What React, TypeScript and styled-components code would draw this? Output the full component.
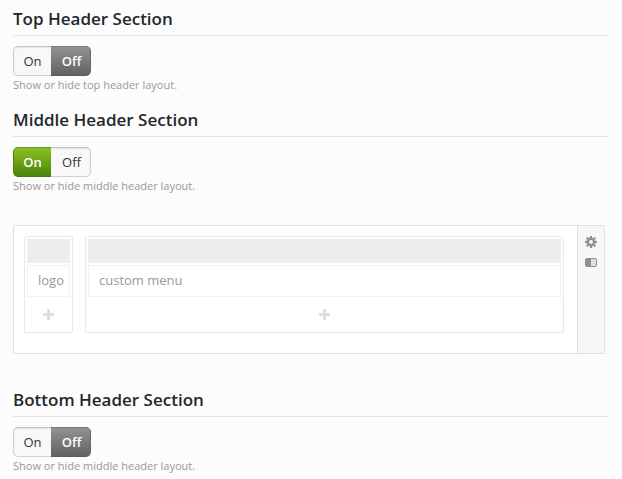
import React from 'react';
import styled, { createGlobalStyle, css } from 'styled-components';

const GlobalStyle = createGlobalStyle`
  * { box-sizing: border-box; }
  body {
    margin: 0;
    background: #fcfcfc;
    font-family: 'Open Sans', 'Noto Sans', sans-serif;
    overflow: hidden;
  }
`;

const Page = styled.main`
  width: 622px;
  height: 479px;
  padding: 0 14px 0 13px;
  overflow: hidden;
`;

const Section = styled.section`
  height: 101px;
`;

const Title = styled.h3`
  margin: 0 0 10px;
  height: 36px;
  padding-top: 7px;
  border-bottom: 1px solid #e5e5e5;
  font-size: 17px;
  line-height: 24px;
  font-weight: 600;
  color: #23282d;
`;

const Switch = styled.div`
  display: flex;
  width: 78px;
  height: 30px;
`;

const tones = {
  idle: css`
    background: #f8f8f8;
    border-color: #c4c4c4 #d0d0d0 #d0d0d0;
    color: #333;
    box-shadow: inset 0 1px 1px #e4e4e4;
  `,
  green: css`
    background: linear-gradient(#8abf20, #4b850c);
    border-color: #669a1c #4f8610 #457a0c;
    color: #fff;
    font-weight: 600;
  `,
  gray: css`
    background: linear-gradient(#929292, #626262);
    border-color: #777 #686868 #5c5c5c;
    color: #fff;
    font-weight: 600;
  `,
};

const Option = styled.button<{ $tone: keyof typeof tones }>`
  width: 38px;
  padding: 0;
  border: 1px solid;
  font-family: inherit;
  font-size: 13px;
  line-height: 28px;
  ${({ $tone }) => tones[$tone]}
  &:first-child {
    border-right: 0;
    border-radius: 5px 0 0 5px;
  }
  &:last-child {
    width: 40px;
    padding-left: 2px;
    border-left: 0;
    border-radius: 0 5px 5px 0;
  }
`;

const Hint = styled.p`
  margin: 1px 0 0;
  font-size: 11px;
  line-height: 16px;
  color: #999;
`;

const Builder = styled.div`
  display: flex;
  width: 592px;
  height: 129px;
  margin: 23px 0 27px;
  border: 1px solid #dfdfdf;
  border-radius: 2px;
  background: #fff;
`;

const Columns = styled.div`
  display: flex;
  flex: 1;
  align-items: flex-start;
  gap: 12px;
  padding: 10px 13px 0 10px;
`;

const Column = styled.div<{ $grow?: boolean }>`
  display: flex;
  flex-direction: column;
  ${({ $grow }) => ($grow ? 'flex: 1;' : 'width: 49px;')}
  height: 97px;
  padding: 2px;
  border: 1px solid #e8e8e8;
  border-radius: 2px;
`;

const Handle = styled.div`
  height: 24px;
  margin-bottom: 2px;
  background: #ededed;
`;

const Item = styled.div`
  height: 32px;
  padding-left: 10px;
  border: 1px solid #f1f1f1;
  font-size: 13px;
  line-height: 29px;
  color: #999;
`;

const AddButton = styled.button`
  display: flex;
  flex: 1;
  align-items: center;
  justify-content: center;
  padding: 2px 0 0;
  border: 0;
  background: none;
`;

const Tools = styled.aside`
  display: flex;
  flex-direction: column;
  align-items: center;
  width: 27px;
  padding-top: 10px;
  gap: 10px;
  border-left: 1px solid #dfdfdf;
  background: #f7f7f7;
  svg { display: block; }
`;

const PlusIcon = () => (
  <svg width="11" height="11" viewBox="0 0 11 11">
    <path d="M4 0h3v4h4v3H7v4H4V7H0V4h4z" fill="#dedede" />
  </svg>
);

const GearIcon = () => (
  <svg width="12" height="12" viewBox="0 0 12 12" fill="none" stroke="#8f8f8f">
    <circle cx="6" cy="6" r="3.2" strokeWidth="2.4" />
    <path d="M6 0v2M6 10v2M0 6h2M10 6h2M1.7 1.7l1.4 1.4M8.9 8.9l1.4 1.4M1.7 10.3l1.4-1.4M8.9 3.1l1.4-1.4" strokeWidth="2.2" />
  </svg>
);

const ContrastIcon = () => (
  <svg width="12" height="9" viewBox="0 0 12 9">
    <rect x=".5" y=".5" width="11" height="8" rx="1.5" fill="#dedede" stroke="#8f8f8f" />
    <path d="M1 1h5v7H1z" fill="#8f8f8f" />
  </svg>
);

interface SettingProps {
  title: string;
  hint: string;
  on?: boolean;
}

const Setting = ({ title, hint, on = false }: SettingProps) => (
  <Section>
    <Title>{title}</Title>
    <Switch>
      <Option $tone={on ? 'green' : 'idle'}>On</Option>
      <Option $tone={on ? 'idle' : 'gray'}>Off</Option>
    </Switch>
    <Hint>{hint}</Hint>
  </Section>
);

const BuilderColumn = ({ label, grow }: { label: string; grow?: boolean }) => (
  <Column $grow={grow}>
    <Handle />
    <Item>{label}</Item>
    <AddButton aria-label="Add">
      <PlusIcon />
    </AddButton>
  </Column>
);

export default function App() {
  return (
    <>
      <GlobalStyle />
      <Page>
        <Setting title="Top Header Section" hint="Show or hide top header layout." />
        <Setting title="Middle Header Section" hint="Show or hide middle header layout." on />
        <Builder>
          <Columns>
            <BuilderColumn label="logo" />
            <BuilderColumn label="custom menu" grow />
          </Columns>
          <Tools>
            <GearIcon />
            <ContrastIcon />
          </Tools>
        </Builder>
        <Setting title="Bottom Header Section" hint="Show or hide middle header layout." />
      </Page>
    </>
  );
}
